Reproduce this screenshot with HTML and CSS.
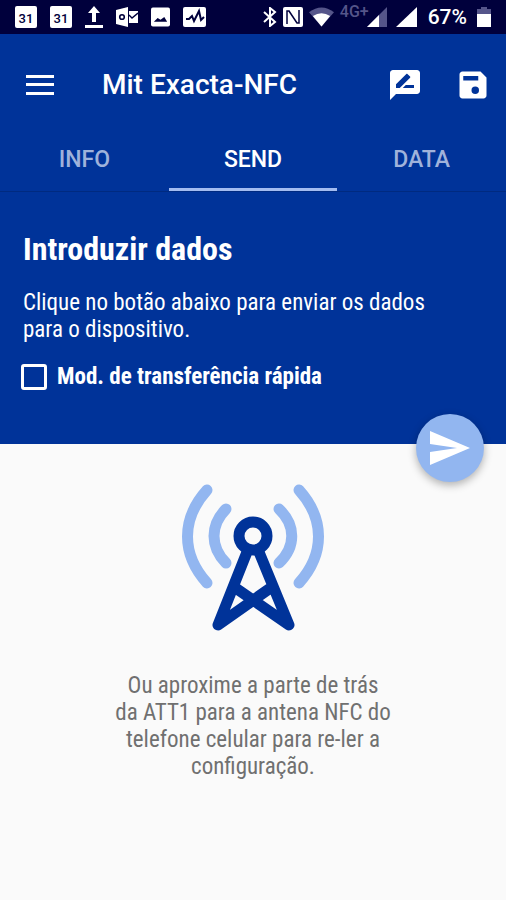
FILE: index.html
```html
<!DOCTYPE html>
<html lang="pt">
<head>
  <meta charset="UTF-8" />
  <meta name="viewport" content="width=device-width, initial-scale=1.0"/>
  <title>Mit Exacta-NFC</title>
  <link rel="stylesheet" href="styles.css">
</head>
<body>

  <!-- Status bar -->
  <div class="status-bar">
    <div class="status-group notifications">
      <div class="calendar">31</div>
      <div class="calendar">31</div>
      <svg width="18" height="22" viewBox="0 0 18 22" fill="#fff"><path d="M9 0l6 7h-4v9H7V7H3zM0 19h18v3H0z"/></svg>
      <svg width="22" height="20" viewBox="0 0 22 20"><path fill="#fff" d="M0 3l12-3v20L0 17zM13 4h9v12h-9z"/><circle cx="6" cy="10" r="2.3" fill="none" stroke="#00003c" stroke-width="1.6"/><path d="M13 8l3 3 6-5" fill="none" stroke="#00003c" stroke-width="1.4"/></svg>
      <svg width="19" height="20" viewBox="0 0 20 20"><rect width="20" height="20" rx="2" fill="#fff"/><path fill="#00003c" d="M3 15l4-4 3 2 4-3 3 5z"/></svg>
      <svg width="23" height="20" viewBox="0 0 23 20"><rect width="23" height="20" rx="2" fill="#fff"/><path d="M3 12h3l3-3 2 5 5-10 2 9 3-3" fill="none" stroke="#00003c" stroke-width="2"/></svg>
    </div>
    <div class="status-group system">
      <svg width="14" height="20" viewBox="0 0 14 20" fill="none" stroke="#fff" stroke-width="2"><path d="M1 5l11 10-5 4V1l5 4L1 15"/></svg>
      <svg width="20" height="20" viewBox="0 0 20 20"><rect width="20" height="20" rx="2" fill="#fff"/><path d="M4 17V4h2l8 12M16 3v13h-2L6 4" fill="none" stroke="#00003c" stroke-width="1.5"/></svg>
      <svg width="25" height="20" viewBox="0 0 26 20"><path fill="#55558a" d="M0 5Q13-5 26 5L13 20z"/><path fill="#fff" d="M4 9q9-6 18 0l-9 11z"/></svg>
      <div class="mobile">
        <span class="network">4G+</span>
        <svg width="20" height="20" viewBox="0 0 20 20"><path fill="#55558a" d="M20 0v20H0z"/><path fill="#fff" d="M12 8v12H0z"/></svg>
      </div>
      <svg class="signal" width="21" height="20" viewBox="0 0 21 20"><path fill="#fff" d="M21 0v20H0z"/></svg>
      <span class="battery-level">67%</span>
      <svg width="14" height="20" viewBox="0 0 14 20"><path fill="#55558a" d="M4 0h6v2h4v5H0V2h4z"/><path fill="#fff" d="M0 7h14v13H0z"/></svg>
    </div>
  </div>

  <!-- App bar -->
  <header>
    <div class="toolbar">
      <button class="icon-btn" type="button" aria-label="Menu">
        <svg width="28" height="20" viewBox="0 0 28 20" fill="#fff"><path d="M0 0h28v3H0zM0 8h28v3H0zM0 17h28v3H0z"/></svg>
      </button>
      <h1>Mit Exacta-NFC</h1>
      <button class="icon-btn" type="button" aria-label="Editar">
        <svg width="36" height="36" viewBox="0 0 24 24"><path fill="#fff" d="M20 2H4c-1.100 0-2 .9-2 2v18l4-4h14c1.100 0 2-.9 2-2V4c0-1.100-.9-2-2-2z"/><path fill="#003399" d="M6 14v-2.500l6.900-6.900c.2-.2.500-.2.700 0l1.800 1.800c.2.200.2.500 0 .7L8.500 14zm12 0h-7.500l2-2H18z"/></svg>
      </button>
      <button class="icon-btn" type="button" aria-label="Salvar">
        <svg width="36" height="36" viewBox="0 0 24 24" fill="#fff"><path fill-rule="evenodd" d="M17 3H5c-1.110 0-2 .9-2 2v14c0 1.100.89 2 2 2h14c1.100 0 2-.9 2-2V7zM13.500 18a2.500 2.500 0 1 1 0-5 2.500 2.500 0 0 1 0 5zM15.500 9H5.500V6h10z"/></svg>
      </button>
    </div>
    <nav class="tabs">
      <a href="#info">INFO</a>
      <a href="#send" class="active">SEND</a>
      <a href="#data">DATA</a>
    </nav>
  </header>

  <!-- Send panel -->
  <section class="panel">
    <h2>Introduzir dados</h2>
    <p>Clique no botão abaixo para enviar os dados para o dispositivo.</p>
    <label class="fast-mode">
      <input type="checkbox">
      Mod. de transferência rápida
    </label>
    <button class="send-btn" type="button" aria-label="Enviar">
      <svg width="40" height="34" viewBox="0 0 40 34" fill="#fff"><path d="M0 0l40 17L0 34V21l27-4L0 13z"/></svg>
    </button>
  </section>

  <!-- NFC hint -->
  <main>
    <svg class="antenna" width="144" height="148" viewBox="0 0 144 148" fill="none" stroke-linecap="round" stroke-linejoin="round">
      <g stroke="#92b6f0" stroke-width="11">
        <path d="M26 6C0 35 0 70 26 99M45 25C29 41 29 63 45 79"/>
        <path d="M118 6C144 35 144 70 118 99M98 25C115 41 115 63 98 79"/>
      </g>
      <g stroke="#003399" stroke-width="11">
        <circle cx="72" cy="52" r="14"/>
        <path d="M66 68L37 141L88 105M78 68L108 141L56 105"/>
      </g>
    </svg>
    <p>Ou aproxime a parte de trás da ATT1 para a antena NFC do telefone celular para re-ler a configuração.</p>
  </main>

</body>
</html>
```
FILE: styles.css
```css
* {
  box-sizing: border-box;
}

body {
  margin: 0;
  min-height: 100vh;
  background: #fafafa;
  color: #fff;
  font-family: 'Roboto Condensed', Roboto, sans-serif;
}

svg {
  display: block;
}

.status-bar {
  display: flex;
  justify-content: space-between;
  align-items: center;
  height: 34px;
  padding: 0 15px;
  background: #00003c;
  font-family: Roboto, sans-serif;
}

.status-group {
  display: flex;
  align-items: center;
}

.notifications {
  gap: 13px;
}

.system {
  gap: 6px;
}

.calendar {
  width: 22px;
  height: 22px;
  border-radius: 2px;
  background: #fff;
  color: #00003c;
  font-size: 13px;
  font-weight: 500;
  line-height: 25px;
  text-align: center;
}

.mobile {
  display: flex;
}

.network {
  margin-right: -2px;
  color: #55558a;
  font-size: 16px;
  font-weight: 500;
  line-height: 10px;
}

.signal {
  margin: 0 5px 0 3px;
}

.battery-level {
  margin-right: 4px;
  font-size: 21px;
  font-weight: 500;
}

header {
  background: #003399;
  font-family: Roboto, sans-serif;
  border-bottom: 1px solid #002a80;
}

.toolbar {
  display: flex;
  align-items: center;
  gap: 32px;
  height: 101px;
  padding: 0 15px 0 26px;
}

.toolbar h1 {
  flex: 1;
  margin: 0 0 0 16px;
  font-size: 28px;
  font-weight: 500;
}

.icon-btn {
  padding: 0;
  border: none;
  background: none;
  cursor: pointer;
}

.tabs {
  display: flex;
}

.tabs a {
  flex: 1;
  height: 56px;
  border-bottom: 3px solid transparent;
  color: #9fb2db;
  font-size: 23px;
  font-weight: 500;
  line-height: 49px;
  text-align: center;
  text-decoration: none;
}

.tabs a.active {
  border-color: #a3bcf0;
  color: #fff;
}

.panel {
  position: relative;
  padding: 37px 80px 54px 23px;
  background: #003399;
}

.panel h2 {
  margin: 0 0 20px;
  font-size: 32px;
  font-weight: 700;
  line-height: 40px;
}

.panel p {
  margin: 0 0 20px;
  font-size: 23px;
  line-height: 27px;
}

.fast-mode {
  display: flex;
  align-items: center;
  gap: 10px;
  font-size: 23px;
  font-weight: 700;
  line-height: 27px;
  cursor: pointer;
}

.fast-mode input {
  appearance: none;
  width: 26px;
  height: 26px;
  margin: 0 0 0 -2px;
  border: 3px solid #fff;
  border-radius: 3px;
}

.fast-mode input:checked {
  background: #92b6f0;
}

/* floats over the lower edge of the panel */
.send-btn {
  position: absolute;
  right: 22px;
  bottom: -38px;
  display: flex;
  align-items: center;
  justify-content: center;
  width: 68px;
  height: 68px;
  padding: 0;
  border: none;
  border-radius: 50%;
  background: #92b6f0;
  box-shadow: 0 3px 8px rgba(0, 0, 0, 0.3);
  cursor: pointer;
}

main {
  padding: 40px 100px;
  color: #707070;
  text-align: center;
}

.antenna {
  margin: 0 auto 40px;
}

main p {
  max-width: 276px;
  margin: 0 auto;
  font-size: 23px;
  line-height: 27px;
}
```
